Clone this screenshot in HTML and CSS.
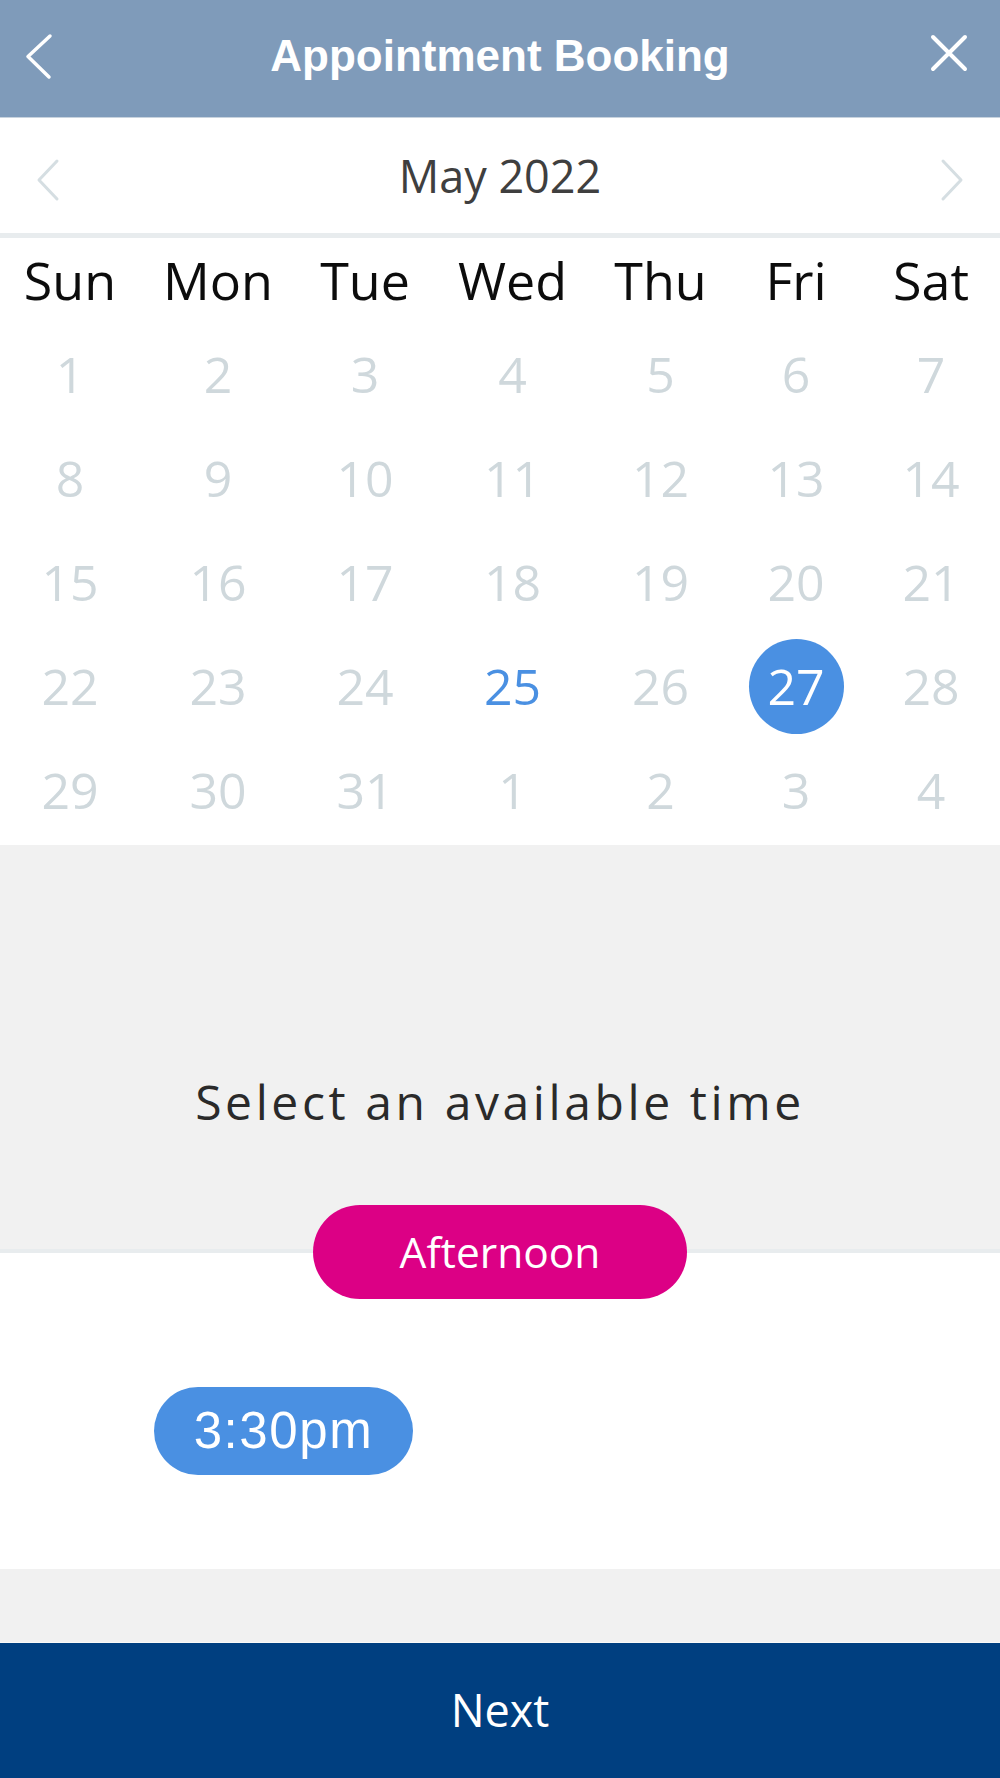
FILE: index.html
```html
<!DOCTYPE html>
<html lang="en">
<head>
<meta charset="utf-8">
<title>Appointment Booking</title>
<link rel="stylesheet" href="styles.css">
</head>
<body>
<div class="page">
  <header class="topbar">
    <svg class="top-icon" viewBox="0 0 80 117" width="80" height="117" aria-hidden="true">
      <polyline points="50,36 28,56.5 49,77" fill="none" stroke="#fff" stroke-width="3.5" stroke-linecap="round" stroke-linejoin="round"/>
    </svg>
    <h1 class="title">Appointment Booking</h1>
    <svg class="top-icon right" viewBox="0 0 80 117" width="80" height="117" aria-hidden="true">
      <path d="M13 37 L45 69 M45 37 L13 69" fill="none" stroke="#fff" stroke-width="4" stroke-linecap="round"/>
    </svg>
  </header>

  <section class="calendar">
    <div class="month-nav">
      <svg class="nav-icon" viewBox="0 0 80 115" width="80" height="115" aria-hidden="true">
        <polyline points="57,43 39,62 57,81" fill="none" stroke="#d5dee2" stroke-width="3" stroke-linecap="round" stroke-linejoin="round"/>
      </svg>
      <div class="month">May 2022</div>
      <svg class="nav-icon right" viewBox="0 0 80 115" width="80" height="115" aria-hidden="true">
        <polyline points="23,43 41,62 23,81" fill="none" stroke="#d5dee2" stroke-width="3" stroke-linecap="round" stroke-linejoin="round"/>
      </svg>
    </div>
    <div class="grid weekdays">
      <div>Sun</div><div>Mon</div><div>Tue</div><div>Wed</div><div>Thu</div><div>Fri</div><div>Sat</div>
    </div>
    <div class="grid days">
      <div>1</div><div>2</div><div>3</div><div>4</div><div>5</div><div>6</div><div>7</div>
      <div>8</div><div>9</div><div>10</div><div>11</div><div>12</div><div>13</div><div>14</div>
      <div>15</div><div>16</div><div>17</div><div>18</div><div>19</div><div>20</div><div>21</div>
      <div>22</div><div>23</div><div>24</div><div class="today">25</div><div>26</div><div><span class="selected">27</span></div><div>28</div>
      <div>29</div><div>30</div><div>31</div><div>1</div><div>2</div><div>3</div><div>4</div>
    </div>
  </section>

  <section class="select-head">
    <p class="select-text">Select an available time</p>
  </section>

  <section class="times">
    <div class="period">Afternoon</div>
    <div class="slot-row">
      <button class="slot">3:30pm</button>
    </div>
  </section>

  <div class="spacer"></div>

  <footer class="next-bar">Next</footer>
</div>
</body>
</html>
```

FILE: styles.css
```css
* {
  box-sizing: border-box;
}

html, body {
  margin: 0;
  padding: 0;
  background: #ffffff;
}

.page {
  width: 1000px;
  height: 1778px;
  display: flex;
  flex-direction: column;
  font-family: "Open Sans", "Noto Sans", sans-serif;
  overflow: hidden;
}

/* Header */
.topbar {
  height: 118px;
  flex: none;
  background: #7f9bba;
  border-bottom: 1px solid #c8d3de;
  display: grid;
  grid-template-columns: 1fr auto 1fr;
  align-items: start;
}

.top-icon {
  display: block;
}

.top-icon.right {
  justify-self: end;
}

.title {
  margin: 0;
  font-family: "Liberation Sans", Arial, sans-serif;
  font-weight: 700;
  font-size: 44px;
  line-height: 112px;
  color: #ffffff;
  text-align: center;
}

/* Calendar */
.calendar {
  flex: none;
  background: #ffffff;
  padding-bottom: 3px;
}

.month-nav {
  height: 120px;
  border-bottom: 5px solid #e8ecee;
  display: grid;
  grid-template-columns: 1fr auto 1fr;
  align-items: start;
}

.nav-icon {
  display: block;
}

.nav-icon.right {
  justify-self: end;
}

.month {
  font-size: 45px;
  line-height: 115px;
  color: #3f3f3f;
  text-align: center;
}

.grid {
  display: grid;
  grid-template-columns: 140px 156px 138px 157px 139px 132px 138px;
  text-align: center;
}

.weekdays {
  height: 84px;
  font-size: 52px;
  line-height: 84px;
  color: #0c0c0c;
}

.days {
  grid-auto-rows: 104px;
  font-size: 50px;
  line-height: 104px;
  color: #cfd8dc;
}

.days > div {
  display: flex;
  align-items: center;
  justify-content: center;
}

.today {
  color: #4a90e2;
}

.selected {
  width: 95px;
  height: 95px;
  border-radius: 50%;
  background: #4a90e2;
  color: #ffffff;
  display: flex;
  align-items: center;
  justify-content: center;
  line-height: 95px;
}

/* Select heading */
.select-head {
  flex: none;
  height: 408px;
  background: #f1f1f1;
  border-bottom: 4px solid #e8ecee;
  padding-top: 224px;
}

.select-text {
  margin: 0;
  font-size: 48px;
  line-height: 66px;
  letter-spacing: 3.6px;
  color: #2a2a2a;
  text-align: center;
}

/* Times */
.times {
  flex: none;
  height: 316px;
  background: #ffffff;
  display: flex;
  flex-direction: column;
  align-items: center;
}

.period {
  width: 374px;
  height: 94px;
  margin-top: -48px;
  border-radius: 47px;
  background: #dc0085;
  color: #ffffff;
  font-size: 42.5px;
  line-height: 94px;
  text-align: center;
}

.slot-row {
  align-self: stretch;
  padding-left: 154px;
  margin-top: 88px;
}

.slot {
  width: 259px;
  height: 88px;
  border: none;
  border-radius: 44px;
  background: #4a90e2;
  color: #ffffff;
  font-family: "Liberation Sans", Arial, sans-serif;
  font-size: 51px;
  letter-spacing: 1.6px;
  line-height: 88px;
  padding: 0;
  display: block;
}

.spacer {
  flex: none;
  height: 74px;
  background: #f1f1f1;
  border-bottom: 1px solid #f9f9f9;
}

.next-bar {
  flex: 1;
  background: #003f80;
  color: #ffffff;
  font-size: 45px;
  display: flex;
  align-items: center;
  justify-content: center;
  padding-bottom: 2px;
}
```
